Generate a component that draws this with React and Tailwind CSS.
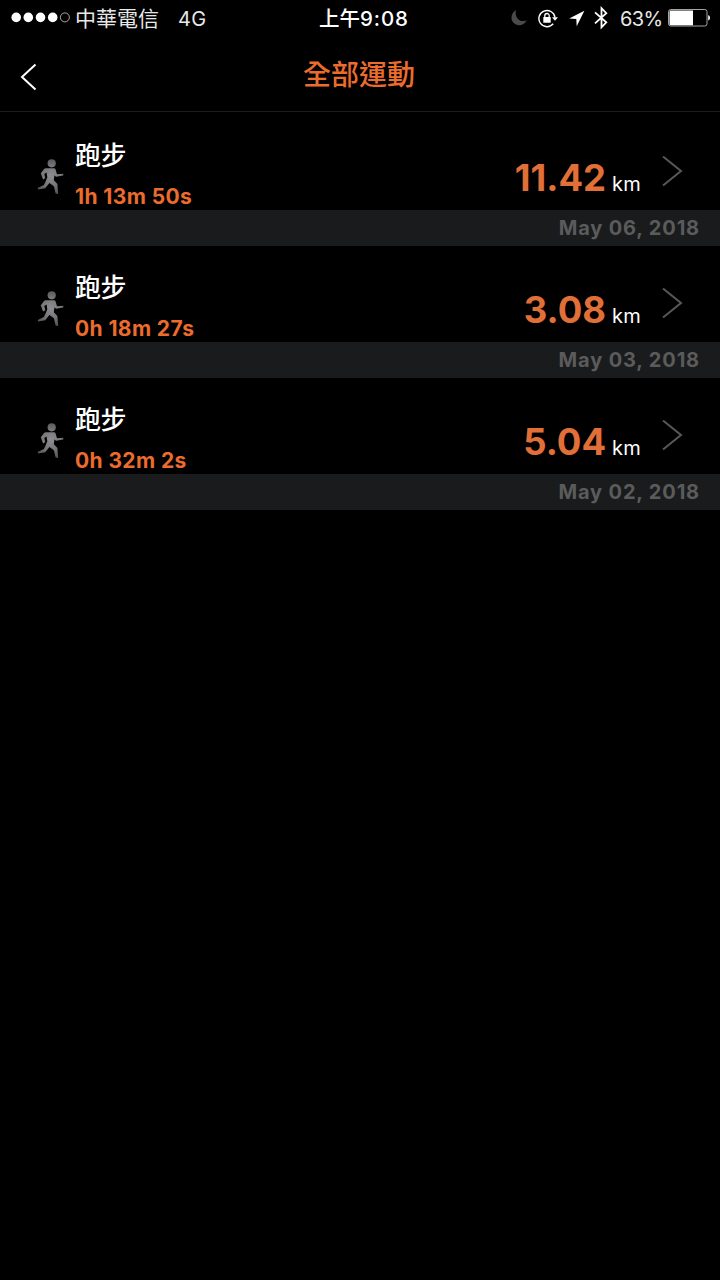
import React from 'react';

const WORKOUTS = [
  { name: '跑步', duration: '1h 13m 50s', distance: '11.42', date: 'May 06, 2018' },
  { name: '跑步', duration: '0h 18m 27s', distance: '3.08', date: 'May 03, 2018' },
  { name: '跑步', duration: '0h 32m 2s', distance: '5.04', date: 'May 02, 2018' },
];

function Signal() {
  return (
    <svg width="60" height="12" viewBox="0 0 60 12">
      {[5.2, 17.3, 29.5, 41.7].map((x) => (
        <circle key={x} cx={x} cy="5.4" r="4.8" fill="#fff" />
      ))}
      <circle cx="53.9" cy="5.4" r="4.5" fill="none" stroke="#bbb" strokeWidth="0.9" />
    </svg>
  );
}

function Moon() {
  return (
    <svg width="16" height="18" viewBox="0 0 16 18">
      <path d="M5.2 1C0.6 3.4-0.8 9 1.7 12.8c3.2 4.8 11 4.6 14-1.6C11.5 13 8 12 6.2 9 4.7 6.5 4.2 3.8 5.2 1Z" fill="#4a4a4c" />
    </svg>
  );
}

function RotationLock() {
  return (
    <svg width="21" height="19" viewBox="0 0 21 19" fill="none" stroke="#fff">
      <path d="M15.2 14.8A8.1 8.1 0 1 1 17 8.3" strokeWidth="1.4" />
      <path d="M14 8.2h6l-3 3.5z" fill="#fff" stroke="none" />
      <rect x="5.3" y="8" width="7.4" height="5.8" rx="0.6" fill="#fff" stroke="none" />
      <path d="M6.8 8.5V6.7a2.2 2.2 0 0 1 4.4 0v1.8" strokeWidth="1.3" />
    </svg>
  );
}

function LocationArrow() {
  return (
    <svg width="16" height="17" viewBox="0 0 16 17">
      <path d="M15.4 0.8 0.2 8.5l7.1 0.6 0.4 7.1z" fill="#fff" />
    </svg>
  );
}

function Bluetooth() {
  return (
    <svg width="14" height="24" viewBox="0 0 14 24" fill="none" stroke="#fff" strokeWidth="1.8">
      <path d="M1 6.3 12.3 16.3 7.5 21.3V2.2l4.8 5L1 17.3" />
    </svg>
  );
}

function Battery() {
  return (
    <svg width="43" height="18" viewBox="0 0 43 18">
      <rect x="0.5" y="0.5" width="38.5" height="16.5" rx="2.2" fill="none" stroke="#a5a5a5" />
      <path d="M2.5 1.5H25v14.7H2.5a1 1 0 0 1-1-1V2.5a1 1 0 0 1 1-1z" fill="#fff" />
      <path d="M40.2 6.2c2.4 0.5 2.4 4.7 0 5.2z" fill="#fff" />
    </svg>
  );
}

function Runner() {
  return (
    <svg width="28" height="38" viewBox="0 0 28 38">
      <defs>
        <radialGradient id="runner" gradientUnits="userSpaceOnUse" cx="14" cy="18" r="20">
          <stop offset="0" stopColor="#8e8e92" />
          <stop offset="0.5" stopColor="#77777a" />
          <stop offset="1" stopColor="#4c4c4e" />
        </radialGradient>
      </defs>
      <g fill="url(#runner)">
        <circle cx="14.7" cy="5.3" r="4.1" />
        <path d="M9 10.3H17Q18.3 10.3 18.6 11.5L20 16.3 26.3 15.700V17.500L19 18.800 17.500 17.300 16.800 22.300 20.400 26 21.200 35.900 18.600 35.600 16.900 28.200 12.400 25 8.200 30.300 1.100 31.600 0.700 29.900 6.900 27.100 8.600 23.500 10.300 19.200 9.600 14.500 7.300 16.100 8.300 20.200 6 21.400 3.800 15.200 6.600 11.400Q7.500 10.300 9 10.300Z" />
      </g>
    </svg>
  );
}

function StatusBar() {
  return (
    <div className="flex h-9 items-center text-[20px] leading-none text-[#e8e8e8]">
      <div className="flex w-[319px] items-center pl-[11px]">
        <Signal />
        <span className="ml-1 text-[21px]">中華電信</span>
        <span className="ml-[19px] pt-px tracking-[0.3px]">4G</span>
      </div>
      <span className="pt-[3px] text-[20.5px] font-medium text-white">
        上午<span className="tracking-[0.9px]">9:08</span>
      </span>
      <div className="ml-auto flex items-center pr-[9px]">
        <Moon />
        <span className="ml-[11px] flex"><RotationLock /></span>
        <span className="ml-[10px] flex"><LocationArrow /></span>
        <span className="ml-[9px] flex"><Bluetooth /></span>
        <span className="ml-[12px] w-[48px] pt-px tracking-[-0.6px]">63%</span>
        <Battery />
      </div>
    </div>
  );
}

function WorkoutRow({ workout }) {
  return (
    <li>
      <div className="flex h-24 items-start pl-[37px]">
        <span className="mt-[44px] flex"><Runner /></span>
        <div className="ml-[10px] flex-1 whitespace-nowrap">
          <p className="mt-[22px] text-[26px] leading-[40px] font-medium tracking-[-0.4px] text-white">{workout.name}</p>
          <p className="mt-[9px] text-[21px] leading-6 font-bold tracking-[0.4px] text-[#eb6c2d]">{workout.duration}</p>
        </div>
        <div className="mt-[41px] flex items-baseline leading-[46px]">
          <span className="text-[36.5px] font-bold text-[#e16f38]">{workout.distance}</span>
          <span className="ml-[6px] text-[20px] tracking-[0.2px] text-white">km</span>
        </div>
        <svg width="21" height="32" viewBox="0 0 21 32" className="mt-[41px] mr-[37px] ml-[21px]" fill="none" stroke="#58585a" strokeWidth="2">
          <path d="M1 1.5 19 16 1 30.5" />
        </svg>
      </div>
      <div className="flex h-9 items-center justify-end bg-[#1a1b1c] pr-5 pb-px text-[20px] font-bold tracking-[0.85px] text-[#5b5b5c]">
        {workout.date}
      </div>
    </li>
  );
}

export default function App() {
  return (
    <div className="min-h-screen w-full bg-black font-[Inter,'Noto_Sans_CJK_TC',sans-serif]">
      <StatusBar />
      <header className="flex h-[76px] items-center border-b border-[#1c1c1c] pl-5">
        <svg width="17" height="28" viewBox="0 0 17 28" className="mt-[7px]" fill="none" stroke="#fff" strokeWidth="2">
          <path d="M15.5 1.5 2 14 15.5 26.5" />
        </svg>
        <h1 className="flex-1 pt-[3px] pr-[39px] text-center text-[28px] leading-none font-medium text-[#eb6c2d]">全部運動</h1>
      </header>
      <ul className="mt-[2px]">
        {WORKOUTS.map((workout) => (
          <WorkoutRow key={workout.date} workout={workout} />
        ))}
      </ul>
    </div>
  );
}
